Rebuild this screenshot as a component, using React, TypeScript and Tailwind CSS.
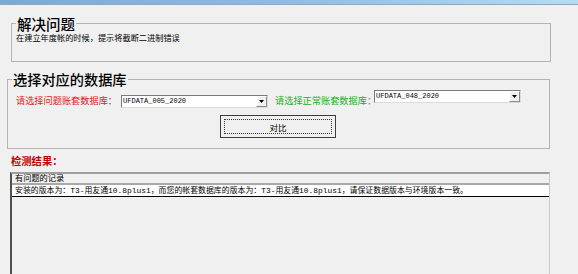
import React from "react";

const cjk = "font-['Noto_Sans_CJK_SC',sans-serif]";
const mono = "font-['Liberation_Mono','Noto_Sans_CJK_SC',monospace]";

function Combo({ value }: { value: string }) {
  return (
    <div className="flex w-[147px] h-[13px] bg-white border border-t-[#7a7a7a] border-l-[#7a7a7a] border-r-[#dcdcdc] border-b-[#dcdcdc]">
      <span className={`flex-1 pl-[1px] text-[7px] leading-[11px] text-black ${mono}`}>{value}</span>
      <span className="w-[11px] h-[11px] bg-[#f0f0f0] border border-t-white border-l-white border-r-[#8a8a8a] border-b-[#8a8a8a] flex items-center justify-center">
        <svg width="5" height="3" viewBox="0 0 5 3">
          <path d="M0 0H5L2.5 3Z" fill="#000" />
        </svg>
      </span>
    </div>
  );
}

export default function App() {
  return (
    <div className={`w-[578px] h-[274px] bg-[#f0f0f0] overflow-hidden flex flex-col ${cjk}`}>
      <div className="h-[4px] bg-gradient-to-r from-[#79a9d6] via-[#8dbde6] to-[#b4dcf4]" />
      <div className="h-[1px] bg-[#9aa6b2]" />

      <fieldset className="ml-[11px] mt-[11px] w-[540px] h-[46px] border border-[#b4b4b4] px-[4px]">
        <legend className="px-[1px] text-[14.5px] leading-[15px] text-black font-medium">解决问题</legend>
        <div className="text-[8.2px] leading-[10px] mt-[1px] text-black">在建立年度帐的时候，提示将截断二进制错误</div>
      </fieldset>

      <fieldset className="ml-[7px] mt-[10px] w-[543px] h-[77px] border border-[#b4b4b4] px-[8px]">
        <legend className="ml-[-4px] px-[1px] text-[14.2px] leading-[15px] text-black font-medium">选择对应的数据库</legend>
        <div className="flex items-start">
          <span className="mt-[7px] text-[9.2px] leading-[12px] text-[#e01818] whitespace-nowrap">请选择问题账套数据库：</span>
          <div className="mt-[8px] ml-[4px]">
            <Combo value="UFDATA_005_2020" />
          </div>
          <span className="mt-[7px] ml-[7px] w-[99px] text-[9.2px] leading-[12px] text-[#22b022] whitespace-nowrap">请选择正常账套数据库：</span>
          <div className="mt-[3px]">
            <Combo value="UFDATA_048_2020" />
          </div>
        </div>
        <div className="flex">
          <button className="ml-[204px] mt-[7px] w-[116px] h-[23px] bg-[#f0f0f0] border border-[#3c3c3c] p-[3px]">
            <span className="flex items-center justify-center w-full h-full border border-dotted border-[#333] text-[8.5px] leading-[10px] text-black">
              对比
            </span>
          </button>
        </div>
      </fieldset>

      <div className="ml-[11px] mt-[5px] text-[10.3px] leading-[13px] font-bold text-[#c00000]">检测结果：</div>

      <div className="ml-[10px] mt-[5px] w-[540px] flex-1 border-l-2 border-l-[#505050] border-t-2 border-t-[#a0a0a0] border-r border-r-[#c8c8c8] bg-[#f0f0f0]">
        <div className={`h-[11px] px-[3px] text-[8.2px] leading-[10px] text-black border-b-2 border-b-[#a8a8a8] ${mono}`}>有问题的记录</div>
        <div className={`h-[12px] px-[3px] bg-white text-[7.9px] leading-[11px] text-black border-b border-b-black whitespace-nowrap ${mono}`}>
          安装的版本为：T3-用友通10.8plus1，而您的帐套数据库的版本为：T3-用友通10.8plus1，请保证数据版本与环境版本一致。
        </div>
      </div>
    </div>
  );
}
